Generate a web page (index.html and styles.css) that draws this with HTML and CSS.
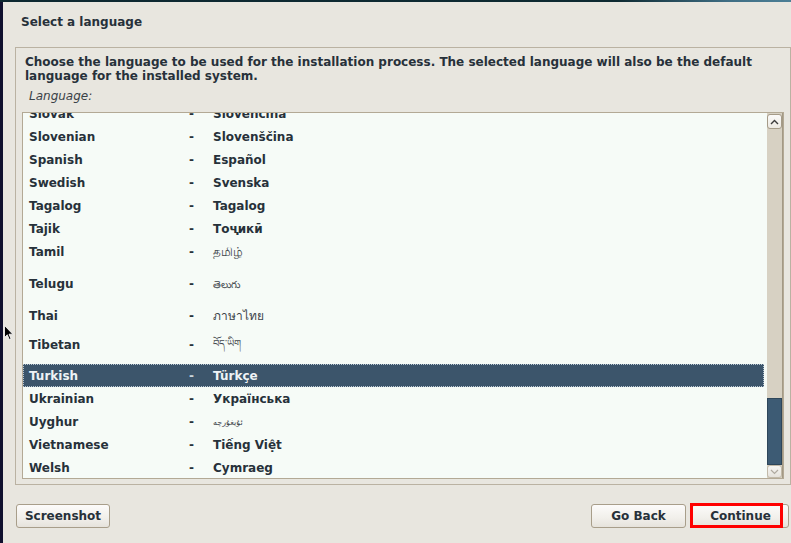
FILE: index.html
```html
<!DOCTYPE html>
<html>
<head>
<meta charset="utf-8">
<link rel="stylesheet" href="styles.css">
</head>
<body>
<div class="topbar"></div>
<div class="main">
  <div class="leftbar"></div>
  <div class="window">
    <div class="title">Select a language</div>
    <div class="panel">
      <div class="desc">Choose the language to be used for the installation process. The selected language will also be the default language for the installed system.</div>
      <div class="label">Language:</div>
      <div class="listbox">
        <div class="rows">
          <div class="row first"><span class="en">Slovak</span><span class="dash">-</span><span class="nat">Slovenčina</span></div>
          <div class="row"><span class="en">Slovenian</span><span class="dash">-</span><span class="nat">Slovenščina</span></div>
          <div class="row"><span class="en">Spanish</span><span class="dash">-</span><span class="nat">Español</span></div>
          <div class="row"><span class="en">Swedish</span><span class="dash">-</span><span class="nat">Svenska</span></div>
          <div class="row"><span class="en">Tagalog</span><span class="dash">-</span><span class="nat">Tagalog</span></div>
          <div class="row"><span class="en">Tajik</span><span class="dash">-</span><span class="nat">Тоҷикӣ</span></div>
          <div class="row tall-32"><span class="en">Tamil</span><span class="dash">-</span><span class="nat script">தமிழ்</span></div>
          <div class="row tall-32"><span class="en">Telugu</span><span class="dash">-</span><span class="nat script small">తెలుగు</span></div>
          <div class="row tall-29"><span class="en">Thai</span><span class="dash">-</span><span class="nat script">ภาษาไทย</span></div>
          <div class="row tall-31"><span class="en">Tibetan</span><span class="dash">-</span><span class="nat script tib">བོད་ཡིག</span></div>
          <div class="row selected"><span class="en">Turkish</span><span class="dash">-</span><span class="nat">Türkçe</span></div>
          <div class="row"><span class="en">Ukrainian</span><span class="dash">-</span><span class="nat">Українська</span></div>
          <div class="row"><span class="en">Uyghur</span><span class="dash">-</span><span class="nat script tiny">ئۇيغۇرچە</span></div>
          <div class="row"><span class="en">Vietnamese</span><span class="dash">-</span><span class="nat">Tiếng Việt</span></div>
          <div class="row"><span class="en">Welsh</span><span class="dash">-</span><span class="nat">Cymraeg</span></div>
        </div>
        <div class="scrollbar">
          <div class="sb-btn sb-up"><svg width="9" height="6" viewBox="0 0 9 6"><path d="M1 5 L4.5 1.5 L8 5" fill="none" stroke="#3a3a3a" stroke-width="1.4"/></svg></div>
          <div class="sb-space"></div>
          <div class="sb-thumb"></div>
          <div class="sb-btn sb-down"><svg width="9" height="6" viewBox="0 0 9 6"><path d="M1 1 L4.5 4.5 L8 1" fill="none" stroke="#b0aaa0" stroke-width="1.2"/></svg></div>
        </div>
      </div>
    </div>
    <div class="buttons">
      <button class="btn btn-shot">Screenshot</button>
      <div class="btn-group">
        <button class="btn btn-back">Go Back</button>
        <button class="btn btn-continue">Continue</button>
      </div>
    </div>
  </div>
</div>
<div class="highlight"></div>
<svg class="cursor" width="10" height="16" viewBox="0 0 10 16"><path d="M0.5 0.5 L0.5 12.5 L3.3 9.8 L5.3 14.5 L7 13.8 L5 9.2 L8.8 9.2 Z" fill="#000" stroke="#fff" stroke-width="0.8"/></svg>
</body>
</html>
```

FILE: styles.css
```css
html, body {
  margin: 0;
  padding: 0;
}
body {
  width: 791px;
  height: 543px;
  overflow: hidden;
  background: #e8e6df;
  font-family: "DejaVu Sans", "Noto Sans", sans-serif;
  font-size: 12px;
  color: #27313a;
  position: relative;
}
.topbar {
  height: 2px;
  background: linear-gradient(to right, #0d2830 0%, #0e2a32 78%, #3f6e84 92%, #4c7f96 100%);
}
.main {
  display: flex;
  height: 541px;
}
.leftbar {
  width: 3px;
  background: #10102e;
  flex: none;
}
.window {
  flex: 1;
  min-width: 0;
  display: flex;
  flex-direction: column;
}
.title {
  font-weight: bold;
  line-height: 14px;
  margin: 13px 0 0 18px;
}
.panel {
  margin: 18px 0 0 12px;
  width: 762px;
  border: 1px solid #bab2a2;
  padding: 7px 6px 5px 6px;
  display: flex;
  flex-direction: column;
}
.desc {
  font-weight: bold;
  line-height: 14px;
  padding-left: 3px;
}
.label {
  font-style: italic;
  line-height: 14px;
  margin-top: 6px;
  padding-left: 7px;
  color: #3a4248;
}
.listbox {
  margin-top: 9px;
  height: 365px;
  border: 1px solid #b3a995;
  background: #f6fbf7;
  display: flex;
  overflow: hidden;
}
.rows {
  width: 741px;
  flex: none;
  overflow: hidden;
}
.row {
  display: flex;
  height: 23px;
  line-height: 23px;
  padding-top: 1px;
  font-weight: bold;
  padding-left: 6px;
  box-sizing: border-box;
  white-space: nowrap;
}
.row.first {
  margin-top: -11px;
}
.row.tall-32 { height: 32px; }
.row.tall-29 { height: 29px; }
.row.tall-31 { height: 31px; }
.en {
  width: 160px;
  flex: none;
}
.dash {
  width: 24px;
  flex: none;
}
.nat.script {
  font-weight: normal;
  color: #3d444a;
  font-size: 12px;
}
.nat.small {
  font-size: 10px;
}
.nat.tib {
  font-size: 10px;
  line-height: 20px;
}
.nat.tiny {
  font-size: 8px;
}
.row.selected {
  background: #3c556b;
  color: #eef3f6;
  outline: 1px dotted #b9c7d2;
  outline-offset: -1px;
}
.row.selected .dash {
  color: #c9d4dc;
}
.scrollbar {
  width: 15px;
  flex: none;
  margin-left: 3px;
  background: #d7d1c3;
  border-right: 1px solid #a39985;
  display: flex;
  flex-direction: column;
}
.sb-btn {
  display: flex;
  align-items: center;
  justify-content: center;
  background: linear-gradient(#fbfaf8, #ece9e2);
  border: 1px solid #a59b88;
  border-radius: 3px;
  box-sizing: border-box;
}
.sb-up {
  height: 15px;
  margin-top: 1px;
}
.sb-space {
  flex: 1;
}
.sb-thumb {
  height: 67px;
  background: #3d5b74;
  border: 1px solid #2e465a;
  box-sizing: border-box;
}
.sb-down {
  height: 13px;
  background: linear-gradient(#f6f5f2, #e6e3dc);
  border-color: #c2baa9;
}
.buttons {
  display: flex;
  justify-content: space-between;
  margin-top: 19px;
  padding: 0 2px 0 13px;
}
.btn-group {
  display: flex;
  gap: 6px;
}
.btn {
  height: 24px;
  margin: 0;
  padding: 0;
  font-family: "DejaVu Sans", sans-serif;
  font-size: 12px;
  font-weight: bold;
  color: #27313a;
  background: linear-gradient(#fcfbfa 0%, #f1efea 60%, #e6e3dc 100%);
  border: 1px solid #a89e8a;
  border-radius: 3px;
}
.btn-shot { width: 94px; }
.btn-back { width: 95px; }
.btn-continue { width: 97px; }
.highlight {
  position: absolute;
  left: 690px;
  top: 503px;
  width: 93px;
  height: 25px;
  border: 3px solid #ff0000;
  box-sizing: border-box;
}
.cursor {
  position: absolute;
  left: 4px;
  top: 325px;
}
```
